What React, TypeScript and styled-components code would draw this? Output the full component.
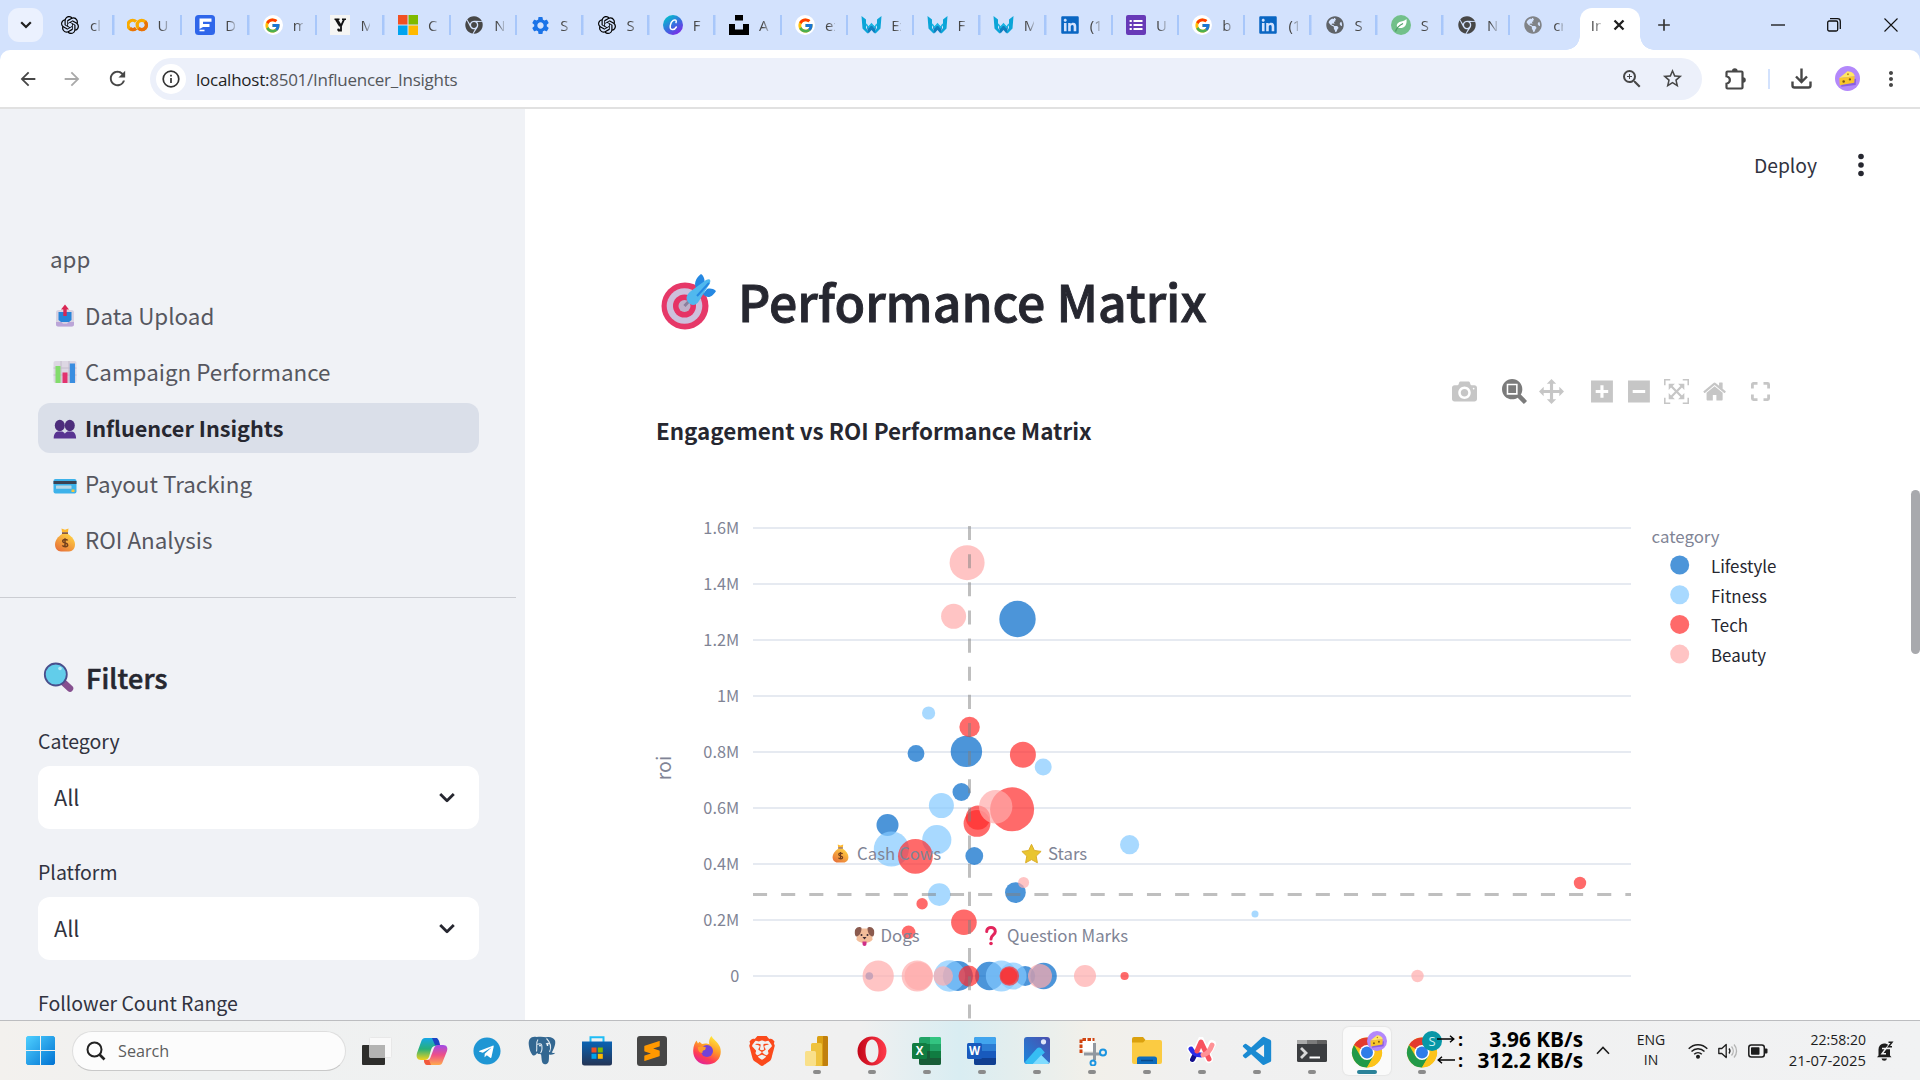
import React from "react";
import styled, { createGlobalStyle, css } from "styled-components";
import { FcGoogle } from "react-icons/fc";
import { SiOpenai, SiBrave, SiSublimetext } from "react-icons/si";
import { FaChrome, FaGlobeAmericas, FaTelegram, FaLinkedin } from "react-icons/fa";
import {
  MdSettings,
  MdArrowBack,
  MdArrowForward,
  MdRefresh,
  MdOutlineZoomIn,
  MdStarOutline,
  MdMoreVert,
  MdAdd,
} from "react-icons/md";
import { BiLogoVisualStudio } from "react-icons/bi";

const SOURCE = `"Noto Sans CJK SC", "Noto Sans", sans-serif`;
const SYSTEM = `"Open Sans", "Noto Sans", sans-serif`;

const GlobalStyle = createGlobalStyle`
  html, body { margin: 0; padding: 0; overflow: hidden; background: #fff; }
  * { box-sizing: border-box; }
  svg { display: block; flex: none; }
`;

const Screen = styled.div`
  width: 1920px;
  height: 1080px;
  display: flex;
  flex-direction: column;
  overflow: hidden;
  font-family: ${SYSTEM};
`;

/* ---------- browser tabs ---------- */

const TabStrip = styled.div`
  height: 50px;
  flex: none;
  display: flex;
  align-items: stretch;
  background: #d3e2fd;
  padding-left: 8px;
`;
const TabSearch = styled.div`
  width: 35px;
  height: 34px;
  margin: 8px 4px 0 0;
  border-radius: 11px;
  background: #ebf1fe;
  display: flex;
  align-items: center;
  justify-content: center;
  color: #1f1f1f;
`;
const Tab = styled.div<{ $w: number; $last?: boolean }>`
  width: ${(p) => p.$w}px;
  flex: none;
  display: flex;
  align-items: center;
  padding-left: 13px;
  gap: 10px;
  background: ${(p) =>
    p.$last ? "none" : "linear-gradient(#a8c7fa, #a8c7fa) right 15px / 2.5px 20px no-repeat"};
`;
const Favicon = styled.span`
  width: 20px;
  height: 20px;
  flex: none;
  display: flex;
  align-items: center;
  justify-content: center;
`;
const FaviconDisc = styled(Favicon)`
  border-radius: 50%;
  background: #fff;
`;
const TabText = styled.span`
  width: 10px;
  overflow: hidden;
  white-space: nowrap;
  font-size: 15px;
  line-height: 22px;
  color: #474747;
  mask-image: linear-gradient(90deg, #000 35%, rgba(0, 0, 0, 0.25));
`;
const ActiveTab = styled.div`
  width: 60px;
  height: 42px;
  margin-top: 8px;
  flex: none;
  position: relative;
  border-radius: 12px 12px 0 0;
  background: #fff;
  display: flex;
  align-items: center;
  padding: 0 0 8px 11px;
  gap: 12px;
  color: #1f1f1f;
  &::before,
  &::after {
    content: "";
    position: absolute;
    bottom: 0;
    width: 14px;
    height: 14px;
  }
  &::before {
    left: -14px;
    background: radial-gradient(circle at 0 0, transparent 13.5px, #fff 14px);
  }
  &::after {
    right: -14px;
    background: radial-gradient(circle at 100% 0, transparent 13.5px, #fff 14px);
  }
`;
const StripButton = styled.div<{ $w: number }>`
  width: ${(p) => p.$w}px;
  display: flex;
  align-items: center;
  justify-content: center;
  color: #333;
`;
const Spacer = styled.div`
  flex: 1;
`;

/* ---------- browser toolbar ---------- */

const ToolbarBack = styled.div`
  flex: none;
  background: #d3e2fd;
`;
const Toolbar = styled.div`
  height: 59px;
  border-bottom: 2px solid #e1e1e1;
  border-radius: 10px 10px 0 0;
  background: #fff;
  display: flex;
  align-items: center;
  padding-left: 5px;
  color: #474747;
`;
const ToolSlot = styled.div<{ $w: number; $dim?: boolean }>`
  width: ${(p) => p.$w}px;
  flex: none;
  display: flex;
  justify-content: center;
  color: ${(p) => (p.$dim ? "#a9a9a9" : "#474747")};
`;
const AddressBar = styled.div`
  width: 1552px;
  height: 42px;
  flex: none;
  margin-left: 9px;
  border-radius: 21px;
  background: #ecf0fa;
  display: flex;
  align-items: center;
  padding: 0 10px 0 6px;
`;
const SiteInfo = styled.div`
  width: 30px;
  height: 30px;
  border-radius: 50%;
  background: #fff;
  display: flex;
  align-items: center;
  justify-content: center;
  margin-right: 10px;
`;
const Url = styled.div`
  font-size: 17px;
  letter-spacing: -0.25px;
  color: #54575c;
  flex: 1;
  padding-top: 1px;
  b {
    font-weight: 400;
    color: #1f1f1f;
  }
`;
const ToolDivider = styled.div`
  width: 2px;
  height: 20px;
  background: #d3e2fd;
`;

/* ---------- page ---------- */

const Page = styled.div`
  height: 911px;
  flex: none;
  display: flex;
  overflow: hidden;
  font-family: ${SOURCE};
`;
const Sidebar = styled.aside`
  width: 525px;
  flex: none;
  background: #f0f2f6;
  padding-top: 126px;
  overflow: hidden;
`;
const Nav = styled.nav`
  display: flex;
  flex-direction: column;
  gap: 6px;
  padding: 0 46px 0 38px;
`;
const NavItem = styled.div<{ $active?: boolean; $plain?: boolean }>`
  height: 50px;
  border-radius: 12px;
  padding: 0 0 ${(p) => (p.$plain ? 4 : 2)}px 12px;
  display: flex;
  align-items: center;
  font-size: 22.4px;
  line-height: 46px;
  white-space: pre;
  color: #56575f;
  ${(p) =>
    p.$active &&
    css`
      background: #dadfe9;
      color: #262730;
      font-weight: 700;
      font-size: 21.65px;
      padding-bottom: 0;
    `}
`;
const NavIcon = styled.span`
  width: 35px;
  padding: 1px 0 0 3px;
  flex: none;
`;
const SideRule = styled.div`
  width: 516px;
  height: 1px;
  margin-top: 32px;
  background: #cbcdd2;
`;
const Filters = styled.section`
  padding: 57px 46px 0 38px;
`;
const FilterTitle = styled.div`
  height: 46px;
  display: flex;
  align-items: center;
  gap: 10px;
  padding-left: 4px;
  font-size: 26.9px;
  font-weight: 500;
  letter-spacing: 0.2px;
  -webkit-text-stroke: 0.6px #262730;
  color: #262730;
  line-height: 46px;
`;
const FieldList = styled.div`
  margin-top: 28px;
`;
const Field = styled.div`
  margin-bottom: 31px;
`;
const FieldLabel = styled.div`
  font-size: 19.5px;
  line-height: 24px;
  margin-bottom: 13px;
  color: #31333f;
`;
const Select = styled.div`
  height: 63px;
  border-radius: 12px;
  background: #fff;
  display: flex;
  align-items: center;
  justify-content: space-between;
  padding: 0 24px 1px 16px;
  font-size: 21.7px;
  line-height: 60px;
  color: #31333f;
`;

const Main = styled.main`
  flex: 1;
  position: relative;
  display: flex;
  flex-direction: column;
  padding-left: 132px;
`;
const AppHeader = styled.header`
  height: 114px;
  flex: none;
  display: flex;
  align-items: center;
  justify-content: flex-end;
  padding: 0 45px 2px 0;
  gap: 30px;
  font-size: 19.3px;
  line-height: 30px;
  color: #31333f;
`;
const Heading = styled.h2`
  margin: 45px 0 0;
  height: 64px;
  flex: none;
  display: flex;
  align-items: center;
  gap: 21px;
  padding-left: 3px;
  font-size: 49.95px;
  font-weight: 500;
  -webkit-text-stroke: 0.9px #262730;
  line-height: 64px;
  color: #262730;
`;
const ModeBar = styled.div`
  margin: 46px 0 0 789px;
  height: 27px;
  flex: none;
  display: flex;
  align-items: center;
  gap: 12px;
`;
const ModeGroup = styled.div`
  display: flex;
  &:last-child {
    margin-left: -3px;
  }
`;
const ModeButton = styled.div<{ $on?: boolean }>`
  width: 37.6px;
  display: flex;
  justify-content: center;
  color: ${(p) => (p.$on ? "#7b7b7b" : "#c6c6c6")};
`;
const ChartTitle = styled.div`
  margin: 10px 0 0 -1px;
  height: 30px;
  flex: none;
  font-size: 22.4px;
  font-weight: 700;
  line-height: 30px;
  color: #262730;
`;
const ChartSvg = styled.svg`
  margin-top: 35px;
  width: 1200px;
  height: 540px;
  overflow: visible;
  font-family: ${SOURCE};
`;
const ScrollThumb = styled.div`
  position: absolute;
  right: 0;
  top: 381px;
  width: 9px;
  height: 164px;
  border-radius: 5px;
  background: #a8a9ad;
`;

/* ---------- taskbar ---------- */

const Taskbar = styled.footer`
  height: 60px;
  flex: none;
  border-top: 1px solid #bcbdc0;
  background: linear-gradient(
    90deg,
    #f3f1ee 0,
    #eff1f1 200px,
    #f0f0f0 860px,
    #d9edf2 960px,
    #e3eeee 1010px,
    #f2f0ea 1090px,
    #f0f0f0 1200px,
    #f1f2f3 1920px
  );
  display: flex;
  align-items: center;
  padding-left: 26px;
`;
const SearchBox = styled.div`
  width: 274px;
  height: 40px;
  margin: 0 3px 0 17px;
  border-radius: 20px;
  background: #fcfcfc;
  border: 1px solid #dedede;
  border-bottom-color: #c9c9c9;
  display: flex;
  align-items: center;
  gap: 12px;
  padding-left: 13px;
  font-size: 16.2px;
  color: #5c5c5c;
`;
const AppSlot = styled.div<{ $state?: "open" | "active" }>`
  width: 55px;
  height: 59px;
  flex: none;
  display: flex;
  align-items: center;
  justify-content: center;
  position: relative;
  &::after {
    content: "";
    position: absolute;
    bottom: 6px;
    left: 50%;
    transform: translateX(-50%);
    height: 4px;
    border-radius: 2px;
    width: ${(p) => (p.$state === "active" ? 20 : p.$state === "open" ? 8 : 0)}px;
    background: ${(p) => (p.$state === "active" ? "#2b8299" : "#8b8b8b")};
  }
`;
const ActivePlate = styled.div<{ $on?: boolean }>`
  width: 48px;
  height: 48px;
  border-radius: 6px;
  background: ${(p) => (p.$on ? "#fafafa" : "none")};
  box-shadow: ${(p) => (p.$on ? "0 0 1px 1px #e6e6e6" : "none")};
  display: flex;
  align-items: center;
  justify-content: center;
`;
const NetMeter = styled.div`
  width: 146px;
  margin-left: -12px;
  padding-bottom: 2px;
  position: relative;
  z-index: 1;
  flex: none;
  color: #000;
  font-weight: 700;
  font-size: 20.8px;
  line-height: 21px;
`;
const NetLine = styled.div`
  display: flex;
  align-items: center;
  justify-content: space-between;
  white-space: nowrap;
`;
const NetArrow = styled.span`
  display: flex;
  align-items: center;
  gap: 3px;
  font-size: 18px;
`;
const Tray = styled.div`
  display: flex;
  align-items: center;
  flex: 1;
  color: #1c1c1c;
`;
const TrayItem = styled.div<{ $w: number }>`
  width: ${(p) => p.$w}px;
  display: flex;
  justify-content: center;
`;
const TrayText = styled.div<{ $w: number; $right?: boolean }>`
  width: ${(p) => p.$w}px;
  padding-bottom: 2px;
  font-size: 14px;
  line-height: 20px;
  text-align: ${(p) => (p.$right ? "right" : "center")};
`;
const DateLine = styled.div`
  font-size: 14.8px;
`;

/* ---------- favicons ---------- */

const Canva = () => (
  <svg width="20" height="20" viewBox="0 0 20 20">
    <defs>
      <linearGradient id="canva" x1="0" y1="0" x2="0.7" y2="1">
        <stop offset="0.1" stopColor="#00c4cc" />
        <stop offset="0.6" stopColor="#3a6be0" />
        <stop offset="1" stopColor="#7d2ae8" />
      </linearGradient>
    </defs>
    <circle cx="10" cy="10" r="10" fill="url(#canva)" />
    <path d="M13 7.6c1-2.2-.8-3.400-2.800-2.200-3 2-4.200 8-1.500 9 1.800.600 3.600-.700 4.600-2.400" stroke="#fff" strokeWidth="1.500" fill="none" strokeLinecap="round" />
  </svg>
);
const Colab = () => (
  <svg width="21" height="14" viewBox="0 0 21 14" fill="none" strokeWidth="3.300">
    <path d="M9 3.600A4.700 4.700 0 1 0 9 10.400" stroke="#f9ab00" />
    <circle cx="14.800" cy="7" r="4.600" stroke="#f9ab00" />
    <path d="M11.500 10.300A4.600 4.600 0 0 0 18 3.700M3 10.300a4.700 4.700 0 0 0 6 .100" stroke="#e8710a" />
  </svg>
);
const FormF = () => (
  <svg width="20" height="20" viewBox="0 0 20 20">
    <rect width="20" height="20" rx="3.500" fill="#2f66ea" />
    <path d="M4.500 3.500h12v3.200H8v2.300h6.500v3H8l-3.500 2z" fill="#fff" />
    <path d="M4.500 15.500h5" stroke="#fff" strokeWidth="1.600" />
  </svg>
);
const YMark = () => (
  <svg width="20" height="20" viewBox="0 0 20 20">
    <rect width="20" height="20" fill="#f5f5f3" />
    <path d="M4.500 4.300h5M12 4.300h4" stroke="#111" strokeWidth="1.400" />
    <path d="m6.500 4.500 4 6.500" stroke="#111" strokeWidth="3" />
    <path d="M14 4.500 11 11v4.500H8" stroke="#111" strokeWidth="1.800" fill="none" />
    <circle cx="8.500" cy="14.800" r="1.300" fill="#111" />
  </svg>
);
const FourSquares = () => (
  <svg width="20" height="20" viewBox="0 0 20 20">
    <path d="M0 0h9.500v9.500H0z" fill="#f25022" />
    <path d="M10.500 0H20v9.500h-9.500z" fill="#7fba00" />
    <path d="M0 10.500h9.500V20H0z" fill="#00a4ef" />
    <path d="M10.500 10.500H20V20h-9.500z" fill="#ffb900" />
  </svg>
);
const Unsplash = () => (
  <svg width="20" height="20" viewBox="0 0 20 20">
    <path d="M6 0h8v5.500H6zM0 9h6v5.500h8V9h6v11H0z" />
  </svg>
);
const Wolf = () => (
  <svg width="21" height="20" viewBox="0 0 21 20">
    <path d="M.500 1 5 4.500V13l3 4-1.500 1.500L1.500 13.500zM20.500 1 16 4.500V13l-3 4 1.500 1.500 5-5z" fill="#0ba5d8" />
    <path d="M6 12.500 10.500 9l4.500 3.500-1.500 6L10.500 15l-3 3.500z" fill="#0f7fc0" />
    <path d="m5 9 2.500 3.500L10.500 9l3 3.500L16 9" stroke="#1ab4e2" fill="none" strokeWidth="1.500" />
  </svg>
);
const Forms = () => (
  <svg width="20" height="20" viewBox="0 0 20 20">
    <rect width="20" height="20" rx="2" fill="#673ab7" />
    <path d="M7.500 6h9M7.500 10h9M7.500 14h9" stroke="#fff" strokeWidth="2.200" />
    <path d="M3.600 6h2.200M3.600 10h2.200M3.600 14h2.200" stroke="#fff" strokeWidth="2.200" />
  </svg>
);
const Leaf = () => (
  <svg width="20" height="20" viewBox="0 0 20 20">
    <circle cx="10" cy="10" r="10" fill="#72c08a" />
    <path d="M15.500 4c.800 6-2 9.500-7.500 9-3-.400-3-4.500.500-6 2.300-1 5-.800 7-3z" fill="#fff" />
    <path d="M4.500 16.500C5.500 13 8 10.500 12 8.500" stroke="#4f9d68" strokeWidth="1.300" fill="none" />
  </svg>
);
const Cheese = ({ size = 26 }: { size?: number }) => (
  <svg width={size} height={size} viewBox="0 0 26 26">
    <circle cx="13" cy="13" r="13" fill="#b388fb" />
    <path d="M5 20.500 20 18.500 20.500 12 5.500 14z" fill="#8a5fe0" transform="translate(1.500 1.200)" />
    <path d="M4.500 12.500 13 5.500c4 .200 7 2 7.500 5.200z" fill="#ffe766" />
    <path d="M4.500 12.500 20.500 10.700 20 17.500 5 20z" fill="#f8c62c" />
    <circle cx="9" cy="16" r="1.300" fill="#7a5416" />
    <circle cx="15.500" cy="14" r="1.200" fill="#7a5416" />
    <circle cx="13.500" cy="8.500" r="1" fill="#b88a1c" />
  </svg>
);

const tabs: { icon: React.ReactNode; text: string; disc?: boolean }[] = [
  { icon: <SiOpenai size={18} />, text: "cl" },
  { icon: <Colab />, text: "U" },
  { icon: <FormF />, text: "D" },
  { icon: <FcGoogle size={17} />, text: "m", disc: true },
  { icon: <YMark />, text: "M" },
  { icon: <FourSquares />, text: "C" },
  { icon: <FaChrome size={18} color="#474747" />, text: "N" },
  { icon: <MdSettings size={21} color="#1a73e8" />, text: "S" },
  { icon: <SiOpenai size={18} />, text: "S" },
  { icon: <Canva />, text: "F" },
  { icon: <Unsplash />, text: "A" },
  { icon: <FcGoogle size={17} />, text: "ex", disc: true },
  { icon: <Wolf />, text: "Ex" },
  { icon: <Wolf />, text: "F" },
  { icon: <Wolf />, text: "M" },
  { icon: <FaLinkedin size={20} color="#0a66c2" />, text: "(1" },
  { icon: <Forms />, text: "U" },
  { icon: <FcGoogle size={17} />, text: "b", disc: true },
  { icon: <FaLinkedin size={20} color="#0a66c2" />, text: "(1" },
  { icon: <FaGlobeAmericas size={18} color="#5f6368" />, text: "S" },
  { icon: <Leaf />, text: "S" },
  { icon: <FaChrome size={18} color="#474747" />, text: "N" },
  { icon: <FaGlobeAmericas size={18} color="#808387" />, text: "cr" },
];

/* ---------- emoji drawings ---------- */

const UploadTray = () => (
  <svg width="24" height="24" viewBox="0 0 24 24">
    <rect x="3" y="6" width="18" height="16.500" rx="2.500" fill="#d8d2e2" />
    <path d="M5.500 8h13v8l-2.500 2h-8l-2.500-2z" fill="#2784d8" />
    <path d="M3 18h5.500l1.500 1.800h4l1.500-1.800H21v2.500a2 2 0 0 1-2 2H5a2 2 0 0 1-2-2z" fill="#bba5d8" />
    <path d="M12 .500 16 5.500h-2.300V12h-3.400V5.500H8z" fill="#d92653" />
  </svg>
);
const BarChart = () => (
  <svg width="24" height="24" viewBox="0 0 24 24">
    <rect x=".500" y="1" width="23" height="22" rx="2" fill="#ddd7e3" />
    <path d="M8 1v22M16 1v22M.500 8h23M.500 15h23" stroke="#c4bccb" />
    <rect x="2.500" y="6" width="5" height="17" fill="#83dc6c" />
    <rect x="9.500" y="12.500" width="5" height="10.500" fill="#e2336f" />
    <rect x="16.800" y="3.500" width="5.200" height="19.500" fill="#3a8ee0" />
  </svg>
);
const People = () => (
  <svg width="24" height="24" viewBox="0 0 24 24" fill="#4d2d7c">
    <ellipse cx="6.800" cy="8.500" rx="5" ry="5.800" />
    <ellipse cx="16.800" cy="8.500" rx="5" ry="5.800" />
    <path d="M.700 21.500c0-5 2.300-6.500 4-7h4.600c1.200.400 2.200 1.300 2.600 2.300.400-1 1.400-1.900 2.600-2.300h4.600c1.700.500 4 2 4 7z" fill="#583491" />
  </svg>
);
const Card = () => (
  <svg width="24" height="24" viewBox="0 0 24 24">
    <rect x=".500" y="7" width="23" height="14.500" rx="2" fill="#3db2ea" />
    <rect x=".500" y="9" width="23" height="3" fill="#3b4252" />
    <rect x="3" y="13.500" width="15.500" height="3.300" rx=".500" fill="#b9d8e6" />
    <rect x="18.500" y="17.500" width="3" height="2.500" fill="#f5c63c" />
  </svg>
);
const BagShape = () => (
  <>
    <path d="M8.500.500 12 1.800 15.500.500 15 4H9z" fill="#ffb92e" />
    <path d="M9 4.200h6v1.800H9z" fill="#8a5a3c" />
    <path d="M9 6h6c4 2.500 7 6.500 7 10.500s-2.500 7-6 7H8c-3.500 0-6-3-6-7S5 8.500 9 6z" fill="url(#bag)" />
    <path d="M14.600 12.500c-.800-1.500-4.900-1.600-4.900.700 0 2.600 5 1.200 5 3.800 0 2.300-4.300 2.200-5.300.400M12 10.200v9.400" stroke="#74401c" strokeWidth="1.500" fill="none" />
  </>
);
const MoneyBag = () => (
  <svg width="24" height="24" viewBox="0 0 24 24">
    <defs>
      <linearGradient id="bag" x1="1" y1="0" x2="0.300" y2="1">
        <stop offset="0.200" stopColor="#fdc842" />
        <stop offset="1" stopColor="#e87539" />
      </linearGradient>
    </defs>
    <BagShape />
  </svg>
);
const Magnifier = () => (
  <svg width="34" height="34" viewBox="0 0 34 34">
    <path d="m21.500 21.500 6.500 6" stroke="#86508f" strokeWidth="6.500" strokeLinecap="round" />
    <circle cx="13.800" cy="13.500" r="11" fill="#62cdea" stroke="#4a4f8c" strokeWidth="1.800" />
    <circle cx="18" cy="7.500" r="1.800" fill="#b4ecfa" />
  </svg>
);
const Target = () => (
  <svg width="57" height="62" viewBox="0 -4 57 62">
    <circle cx="25" cy="33" r="23.500" fill="#e63868" />
    <circle cx="24.500" cy="33" r="17.800" fill="#cdc0dc" />
    <circle cx="24.500" cy="33" r="11.500" fill="#e63365" />
    <circle cx="24.500" cy="33" r="6" fill="#bfb0c8" />
    <path d="M24.500 33 31 26" stroke="#8b7f9d" strokeWidth="3" />
    <path d="M36 15c-3-6 2-12 5-14 3 2 4 6 3.500 10zM43 21c5 6 10 2 13-3-3-2.500-6-3-9-2z" fill="#2588e2" />
    <path d="M28 29c-3-4-1-8 3-11L46 7c4-2 5 0 4 3L39 28c-3 5-8 5-11 1z" fill="#50b8ee" />
    <path d="M37 23 49 10" stroke="#2588e2" strokeWidth="2" />
  </svg>
);
const KebabMenu = () => (
  <svg width="28" height="28" viewBox="0 0 28 28" fill="#262730">
    <circle cx="14" cy="5.500" r="2.800" />
    <circle cx="14" cy="14" r="2.800" />
    <circle cx="14" cy="22.500" r="2.800" />
  </svg>
);
const Chevron = () => (
  <svg width="16" height="11" viewBox="0 0 16 11" fill="none" stroke="#262730" strokeWidth="2.800">
    <path d="m1.200 2 6.800 6.800 6.800-6.800" strokeLinejoin="round" />
  </svg>
);

/* ---------- chart toolbar glyphs (drawn on a flipped 1000-unit em) ---------- */

const Glyph = ({ d, w = 1000 }: { d: string; w?: number }) => (
  <svg width={w / 40} height="25" viewBox={`0 0 ${w} 1000`} fill="currentColor">
    <path d={d} transform="matrix(1 0 0 -1 0 850)" />
  </svg>
);
const glyphs = {
  camera:
    "m500 450c-83 0-150-67-150-150 0-83 67-150 150-150 83 0 150 67 150 150 0 83-67 150-150 150z m400 150h-120c-16 0-34 13-39 29l-31 93c-6 15-23 28-40 28h-340c-16 0-34-13-39-28l-31-94c-6-15-23-28-40-28h-120c-55 0-100-45-100-100v-450c0-55 45-100 100-100h800c55 0 100 45 100 100v450c0 55-45 100-100 100z m-400-550c-138 0-250 112-250 250 0 138 112 250 250 250 138 0 250-112 250-250 0-138-112-250-250-250z m365 380c-19 0-35 16-35 35 0 19 16 35 35 35 19 0 35-16 35-35 0-19-16-35-35-35z",
  zoom: "m1000-25l-250 251c40 63 63 138 63 218 0 224-182 406-407 406-224 0-406-182-406-406s183-406 407-406c80 0 155 22 218 62l250-250 125 125z m-812 250l0 438 437 0 0-438-437 0z m62 375l313 0 0-312-313 0 0 312z",
  pan: "m1000 350l-187 188 0-125-250 0 0 250 125 0-188 187-187-187 125 0 0-250-250 0 0 125-188-188 186-187 0 125 252 0 0-250-125 0 187-188 188 188-125 0 0 250 250 0 0-126 187 188z",
  plus: "m1 787l0-875 875 0 0 875-875 0z m687-500l-187 0 0-187-125 0 0 187-188 0 0 125 188 0 0 187 125 0 0-187 187 0 0-125z",
  minus: "m0 788l0-876 875 0 0 876-875 0z m688-500l-500 0 0 125 500 0 0-125z",
  autoscale:
    "m250 850l-187 0-63 0 0-62 0-188 63 0 0 188 187 0 0 62z m688 0l-188 0 0-62 188 0 0-188 62 0 0 188 0 62-62 0z m-875-938l0 188-63 0 0-188 0-62 63 0 187 0 0 62-187 0z m875 188l0-188-188 0 0-62 188 0 62 0 0 62 0 188-62 0z m-125 188l-1 0-93-94-156 156 156 156 92-93 2 0 0 250-250 0 0-2 93-92-156-156-156 156 94 92 0 2-250 0 0-250 0 0 93 93 157-156-157-156-93 94 0 0 0-250 250 0 0 0-94 93 156 157 156-157-93-93 0 0 250 0 0 250z",
  home: "m786 296v-267q0-15-11-26t-25-10h-214v214h-143v-214h-214q-15 0-25 10t-11 26v267q0 1 0 2t0 2l321 264 321-264q1-1 1-4z m124 39l-34-41q-5-5-12-6h-2q-7 0-12 3l-386 322-386-322q-7-4-13-4-7 2-12 7l-35 41q-4 5-3 13t6 12l401 334q18 15 42 15t43-15l136-114v109q0 8 5 13t13 5h107q8 0 13-5t5-13v-227l122-102q5-5 6-12t-4-13z",
};

/* ---------- chart ---------- */

const palette = { Lifestyle: "#0068c9", Fitness: "#83c9ff", Tech: "#ff2b2b", Beauty: "#ffabab" };
type Category = keyof typeof palette;
const bubbles: Record<Category, [number, number, number][]> = {
  Lifestyle: [
    [1017.5, 619, 18.2], [916, 753.5, 8.4], [966.4, 751.4, 15.7], [961.4, 792, 8.9],
    [887.5, 825, 11], [974.3, 856, 8.9], [1015.4, 892.6, 10.4], [869.3, 976, 3.8],
    [957.9, 976, 15], [989.3, 976, 14.2], [1025.2, 976, 10], [1043.6, 976, 13.2],
  ],
  Fitness: [
    [928.6, 713, 6.6], [1043.2, 767, 8.5], [941.4, 805.6, 12.5], [891.4, 849, 17.6],
    [936.8, 839.7, 14.6], [1129.6, 844.7, 9.6], [939.3, 894.6, 11.3], [949.5, 976, 15.7],
    [1001.3, 976, 15.5], [1013, 976, 13.6], [1255, 914, 3.5],
  ],
  Tech: [
    [969.6, 727, 10.2], [1022.9, 754.8, 13], [977, 823.4, 13.4], [977.9, 817.6, 12.2],
    [1012.1, 809.3, 22], [915.4, 856.3, 17.4], [922.1, 903.7, 5.7], [963.9, 922.3, 12.8],
    [908.6, 932.3, 6.8], [968.9, 976, 10.4], [1009.3, 976, 9.8], [1008.8, 976, 8.4],
    [1124.6, 976, 4.1], [1580, 883, 6.2],
  ],
  Beauty: [
    [967.1, 562.7, 17.5], [953.6, 616.3, 12.5], [995.7, 806.7, 16.7], [1023.6, 882.5, 5.5],
    [878.2, 976, 15.6], [917.3, 976, 15.6], [918.6, 976, 14], [943.2, 976, 9.8],
    [1040, 976, 12], [1085, 976, 11], [1417.5, 976, 6.2],
  ],
};
const ticks = ["1.6M", "1.4M", "1.2M", "1M", "0.8M", "0.6M", "0.4M", "0.2M", "0"];
const quadrants: [number, number, string][] = [
  [857, 860, "Cash Cows"],
  [1048, 860, "Stars"],
  [880.5, 942, "Dogs"],
  [1007, 942, "Question Marks"],
];

const Chart = () => (
  <ChartSvg viewBox="657 480 1200 540">
    {ticks.map((t, i) => (
      <g key={t}>
        <path d={`M753 ${528 + i * 56}H1631`} stroke="#e6eaf1" strokeWidth="2" />
        <text x="739.200" y={534 + i * 56} textAnchor="end" fontSize="16.300" fill="#808495">
          {t}
        </text>
      </g>
    ))}
    <text transform="translate(671 768) rotate(-90)" textAnchor="middle" fontSize="19.500" fill="#808495">
      roi
    </text>
    {(Object.keys(palette) as Category[]).map((c) => (
      <g key={c} fill={palette[c]}>
        {bubbles[c].map(([x, y, r], i) => (
          <circle key={i} cx={x} cy={y} r={r} opacity="0.700" />
        ))}
      </g>
    ))}
    <g stroke="#808080" strokeOpacity="0.500" strokeWidth="3" strokeDasharray="14.070">
      <path d="M969.500 526V1020" />
      <path d="M753 894.500H1631" />
    </g>
    <svg x="831" y="844" width="19" height="19" viewBox="0 0 24 24">
      <BagShape />
    </svg>
    <path
      transform="translate(1031.500 854)"
      d="M0-9.700 2.900-3.500 9.600-2.600 4.700 2.100 5.900 8.800 0 5.600-5.900 8.800-4.700 2.100-9.600-2.600-2.900-3.500z"
      fill="#e9c52f"
      stroke="#dcae2a"
      strokeLinejoin="round"
    />
    <g transform="translate(864.500 936)">
      <path d="M-7-7.500h14l1 11c-2 4.500-14 4.500-16 0z" fill="#f3bd9a" />
      <path d="M-9.500-6C-7-10-4-9-3-8c0 4-1.500 8-5.500 8.500C-10-1-9.800-4-9.500-6zM9.500-6C7-10 4-9 3-8c0 4 1.500 8 5.500 8.500C10-1 9.800-4 9.500-6z" fill="#8a5a4e" />
      <circle cx="-3" cy="-1" r="1" fill="#3c2a33" />
      <circle cx="3" cy="-1" r="1" fill="#3c2a33" />
      <path d="M-2 1h4L0 3.500z" fill="#3c2a33" />
      <path d="M-2 5.500h4v2.500a2 2 0 0 1-4 0z" fill="#cf2f86" />
    </g>
    <g transform="translate(991 936)">
      <path d="M-4.300-4.500c0-5.500 8.600-5.500 8.600 0C4.300-1 0-1 0 3" stroke="#e3255c" strokeWidth="3" fill="none" strokeLinecap="round" />
      <circle cx="0" cy="7.500" r="1.800" fill="#e3255c" />
    </g>
    {quadrants.map(([x, y, label]) => (
      <text key={label} x={x} y={y} fontSize="16.800" fill="#808495">
        {label}
      </text>
    ))}
    <text x="1651.500" y="543" fontSize="16.850" fill="#808495">
      category
    </text>
    {(Object.keys(palette) as Category[]).map((c, i) => (
      <g key={c}>
        <circle cx="1679.700" cy={565 + i * 29.7} r="9.500" fill={palette[c]} opacity="0.700" />
        <text x="1711" y={572.8 + i * 29.7} fontSize="16.900" fill="#262730">
          {c}
        </text>
      </g>
    ))}
  </ChartSvg>
);

/* ---------- taskbar icons ---------- */

const WindowsLogo = () => (
  <svg width="29" height="29" viewBox="0 0 29 29">
    <defs>
      <linearGradient id="win" x1="0" y1="0" x2="1" y2="1">
        <stop offset="0" stopColor="#4fd0ff" />
        <stop offset="1" stopColor="#0072d2" />
      </linearGradient>
    </defs>
    <path d="M1.500 0H14v14H0V1.500zM15 0h12.500L29 1.500V14H15zM0 15h14v14H1.500L0 27.500zM15 15h14v12.500L27.500 29H15z" fill="url(#win)" />
  </svg>
);
const SearchGlass = () => (
  <svg width="20" height="20" viewBox="0 0 20 20" fill="none" stroke="#222" strokeWidth="2">
    <circle cx="8.500" cy="8.500" r="7" />
    <path d="m13.500 13.500 5 5" strokeWidth="2.600" />
  </svg>
);
const TaskView = () => (
  <svg width="30" height="30" viewBox="0 0 30 30">
    <rect x="0" y="9" width="23" height="20" rx="1" fill="#2d2d2b" />
    <rect x="7.500" y="1.500" width="22" height="20" rx="1" fill="#fafafa" opacity=".95" stroke="#ddd" strokeWidth=".500" />
    <rect x="7.500" y="9" width="15.500" height="12.500" fill="#b4b4b3" />
  </svg>
);
const Copilot = () => (
  <svg width="32" height="30" viewBox="0 0 32 30">
    <defs>
      <linearGradient id="cpA" x1="0" y1="0" x2="0" y2="1">
        <stop offset="0" stopColor="#16a6e8" />
        <stop offset="0.500" stopColor="#27b07a" />
        <stop offset="1" stopColor="#f4d21c" />
      </linearGradient>
      <linearGradient id="cpB" x1="0" y1="0" x2="0" y2="1">
        <stop offset="0" stopColor="#a04be8" />
        <stop offset="0.500" stopColor="#ee5088" />
        <stop offset="1" stopColor="#ffab4c" />
      </linearGradient>
    </defs>
    <path d="M9 2h12l3 8h-5c-2 0-3 1-4 4l-2 7c-1 2-2 3-4 3H5c-4 0-5-3-4-7L5 6c1-3 2-4 4-4z" fill="url(#cpA)" />
    <path d="M16 2h4c2 0 3 2 4 7h-5z" fill="#1c43c4" />
    <path d="M23 29H11c-2 0-3-3-3-5h3c2 0 3-1 4-4l3-8c1-2 2-3 4-3h5c4 0 5 3 4 6l-4 10c-1 3-2 4-4 4z" fill="url(#cpB)" />
    <path d="M15 29h-4c-2 0-3-3-3-5h5z" fill="#f2593c" />
  </svg>
);
const Disc = styled.span<{ $size: number }>`
  display: flex;
  width: ${(p) => p.$size}px;
  height: ${(p) => p.$size}px;
  border-radius: 50%;
  background: radial-gradient(#fff 60%, transparent 61%);
`;
const Elephant = () => (
  <svg width="28" height="29" viewBox="0 0 28 29">
    <path
      d="M8.500 1C3 0 .500 3 .700 8c.200 4 2.300 10.500 4.600 11.500 1.700.500 2.700-1 3.700-2.500 1 .800 2.500 1.300 4 1.200.600 2.300.400 5 1 7.300.600 2.600 2.500 3.200 4.600 2.400 2.200-.800 2.400-2.700 2.400-9.400 2.300.500 4.800.200 6.200-1.700-1.200.200-2.800.400-3.500-.200C26 13 28 7.500 27 4.500 25.500 1.300 21.500.200 18 1.300c-2.500-.700-6-.800-9.500-.300z"
      fill="#336791"
    />
    <path
      d="M10 3.500C7.500 6.500 9.500 10 8.500 15.500M18.500 2.500c3.500 3.500 5.500 8 3 13.500M9.500 8.500c1.500-1.200 4-1 4.200.500.400 3 1 5.500-1.200 8M18 8c1.200-1 3-.800 3.800.200"
      stroke="#dfe8ef"
      strokeWidth="1.100"
      fill="none"
    />
    <circle cx="12" cy="9.500" r=".900" fill="#fff" />
    <circle cx="19.500" cy="9" r=".900" fill="#fff" />
  </svg>
);
const Store = () => (
  <svg width="30" height="30" viewBox="0 0 30 30">
    <defs>
      <linearGradient id="store" x1="0" y1="0" x2="0" y2="1">
        <stop offset="0" stopColor="#0a63b4" />
        <stop offset="1" stopColor="#243455" />
      </linearGradient>
    </defs>
    <path d="M8.500 6V1.200h13V6" stroke="#20bdf5" strokeWidth="2" fill="none" />
    <path d="M0 5.500h30V27a2.500 2.500 0 0 1-2.500 2.500h-25A2.500 2.500 0 0 1 0 27z" fill="url(#store)" />
    <path d="M9.500 11.500h5v5h-5z" fill="#f25022" />
    <path d="M15.800 11.500h5v5h-5z" fill="#7fba00" />
    <path d="M9.500 17.800h5v5h-5z" fill="#00a4ef" />
    <path d="M15.800 17.800h5v5h-5z" fill="#ffb900" />
  </svg>
);
const SublimeTile = styled.span`
  width: 30px;
  height: 30px;
  border-radius: 3px;
  background: #464646;
  display: flex;
  align-items: center;
  justify-content: center;
  color: #ff9800;
`;
const Firefox = () => (
  <svg width="28" height="29" viewBox="0 0 28 29">
    <defs>
      <linearGradient id="fox" x1="0.800" y1="0" x2="0.300" y2="1">
        <stop offset="0.050" stopColor="#ffe93a" />
        <stop offset="0.450" stopColor="#ff9528" />
        <stop offset="0.750" stopColor="#ff3b55" />
        <stop offset="1" stopColor="#e0249a" />
      </linearGradient>
    </defs>
    <path d="M18.500 0c1 3 6 5 8.500 11 3 9-3 17.500-13 17.500C5 28.500 0 22 .200 14.500.300 10 2 6.500 3.500 4.500L5 7.500l1.500-1.800L9 8c3-1 6-.500 7.500.500-1-3 0-6.500 2-8.500z" fill="url(#fox)" />
    <circle cx="14" cy="15" r="6" fill="#7442d8" />
    <path d="M5 11c3-1 6-.500 8 .500l-1 2.500c-2 0-3 1.500-2.500 3-3 0-5-3-4.500-6z" fill="#ff9a2c" />
  </svg>
);
const PowerBi = () => (
  <svg width="24" height="30" viewBox="0 0 24 30">
    <rect x="12" width="11" height="30" rx="1.500" fill="#dba014" />
    <path d="M18 0h3.500A1.500 1.500 0 0 1 23 1.500v27a1.500 1.500 0 0 1-1.500 1.500H18z" fill="#c1800d" />
    <rect x="6" y="7" width="11" height="23" rx="1.500" fill="#efc33e" />
    <rect x="0" y="15" width="11" height="15" rx="1.500" fill="#f9e08a" />
  </svg>
);
const Opera = () => (
  <svg width="30" height="30" viewBox="0 0 30 30">
    <defs>
      <linearGradient id="opera" x1="0" y1="0" x2="1" y2="0">
        <stop offset="0" stopColor="#c30618" />
        <stop offset="1" stopColor="#ff3a4a" />
      </linearGradient>
    </defs>
    <path fillRule="evenodd" d="M15 .500a14.500 14.500 0 1 1 0 29 14.500 14.500 0 0 1 0-29zM15 3.500c-4 0-6.500 5-6.500 11.500S11 26.500 15 26.500 21.500 21.500 21.500 15 19 3.500 15 3.500z" fill="url(#opera)" />
  </svg>
);
const OfficeLetter = styled.text`
  font: 700 11.5px "Open Sans", sans-serif;
  fill: #fff;
`;
const Office = ({ letter, colors }: { letter: string; colors: string[] }) => (
  <svg width="30" height="30" viewBox="0 0 30 30">
    <rect x="7" y="1" width="22" height="28" rx="2" fill={colors[1]} />
    {letter === "W" ? (
      <>
        <path d="M7 3a2 2 0 0 1 2-2h18a2 2 0 0 1 2 2v5H7z" fill={colors[0]} />
        <path d="M7 15h22v7H7z" fill={colors[2]} />
        <path d="M7 22h22v5a2 2 0 0 1-2 2H9a2 2 0 0 1-2-2z" fill={colors[3]} />
      </>
    ) : (
      <>
        <path d="M18 1h9a2 2 0 0 1 2 2v5H18z" fill={colors[0]} />
        <path d="M7 8h11v7H7zM18 15h11v7H18z" fill={colors[2]} />
        <path d="M7 15h11v7h11v5a2 2 0 0 1-2 2H9a2 2 0 0 1-2-2z" fill={colors[3]} />
      </>
    )}
    <rect x="0" y="7" width="15" height="16" rx="1.500" fill={colors[4]} />
    <OfficeLetter x="7.500" y="19" textAnchor="middle">
      {letter}
    </OfficeLetter>
  </svg>
);
const Photos = () => (
  <svg width="26" height="27" viewBox="0 0 26 27">
    <defs>
      <linearGradient id="photo" x1="0" y1="1" x2="1" y2="0">
        <stop offset="0" stopColor="#1a86dc" />
        <stop offset="1" stopColor="#4b4fae" />
      </linearGradient>
    </defs>
    <rect width="26" height="27" rx="3" fill="url(#photo)" />
    <path d="M1 25 12.800 11.500a3 3 0 0 1 4.600 0l3.400 3.900L8.500 27H3a3 3 0 0 1-2-2z" fill="#36bdf3" />
    <path d="m8.500 27 8.800-9 8 8a3 3 0 0 1-2.300 1z" fill="#7fdcff" />
    <circle cx="19.500" cy="4.800" r="2.600" fill="#dfe6f8" />
  </svg>
);
const Snip = () => (
  <svg width="30" height="30" viewBox="0 0 30 30" fill="none">
    <path d="M5 3h12v12H5z" fill="#fff" />
    <path d="M4 17V3.500h13.500" stroke="#d0430f" strokeWidth="3" strokeDasharray="3.500 1.500" />
    <path d="M17.500 7v17M7 18h17" stroke="#9198a0" strokeWidth="3" />
    <circle cx="26" cy="16.500" r="3" stroke="#1c94e0" strokeWidth="2" />
    <circle cx="16" cy="27" r="2.500" stroke="#1c94e0" strokeWidth="2" />
  </svg>
);
const Folder = () => (
  <svg width="30" height="27" viewBox="0 0 30 27">
    <path d="M0 2a2 2 0 0 1 2-2h9l2.500 3v5H0z" fill="#dba10e" />
    <path d="M0 5.500h11L13.500 3H28a2 2 0 0 1 2 2v20a2 2 0 0 1-2 2H2a2 2 0 0 1-2-2z" fill="#fbcb42" />
    <path d="M5 27v-5a2.500 2.500 0 0 1 2.500-2.500h15A2.500 2.500 0 0 1 25 22v5z" fill="#0f6cbd" />
    <path d="M9 23.500h12" stroke="#0a4a8a" strokeWidth="1.500" />
  </svg>
);
const Arc = () => (
  <svg width="30" height="28" viewBox="0 0 30 28" fill="none" strokeLinecap="round">
    <g stroke="#fff" strokeWidth="8">
      <path d="m6 22 8-17 8 17M4 12c5 8 16 8 21-5" />
    </g>
    <path d="m5.500 22.500 3-6" stroke="#130f8c" strokeWidth="5" />
    <path d="M4 12c2 4 5 6 10 6" stroke="#2a2be8" strokeWidth="5" />
    <path d="m10 14 4-9 8 17" stroke="#f8525f" strokeWidth="5" strokeLinejoin="round" />
    <path d="M16 18c4-1 7-4 9-10" stroke="#ff9296" strokeWidth="5" />
  </svg>
);
const Terminal = () => (
  <svg width="30" height="22" viewBox="0 0 30 22">
    <rect width="30" height="22" rx="1.500" fill="#3b3d40" />
    <path d="M0 1.500A1.500 1.500 0 0 1 1.500 0H10v4H0z" fill="#a9a9a9" />
    <path d="M10 0h10v4H10z" fill="#7b7b7b" />
    <path d="M20 0h8.500A1.500 1.500 0 0 1 30 1.500V4H20z" fill="#606060" />
    <path d="m4 8 5 5-5 5" stroke="#d8d8d8" strokeWidth="2.800" fill="none" />
    <path d="M12.500 17.500H23" stroke="#fff" strokeWidth="2" />
  </svg>
);
const ChromeBadged = ({ badge }: { badge: "cheese" | "s" }) => (
  <svg width="40" height="40" viewBox="0 0 40 40">
    <circle cx="20" cy="21.500" r="15" fill="#fbc116" />
    <path d="M20 21.500 7 14A15 15 0 0 1 33 14H20z" fill="#e33b2e" />
    <path d="M7 14A15 15 0 0 0 20 36.500l6.500-11.200L13.500 25.200z" fill="#229a49" />
    <path d="M33 14H20V21.500l6.500 3.800L20 36.500A15 15 0 0 0 33 14z" fill="#fcc31a" />
    <circle cx="20" cy="21.500" r="7.500" fill="#fff" />
    <circle cx="20" cy="21.500" r="6" fill="#2f7de9" />
    {badge === "cheese" ? (
      <svg x="20" y="0" width="20" height="20">
        <Cheese size={20} />
      </svg>
    ) : (
      <>
        <circle cx="30" cy="10" r="10" fill="#0797a7" />
        <text x="30" y="14.500" textAnchor="middle" fontSize="13" fill="#cdeff2">
          S
        </text>
      </>
    )}
  </svg>
);
const NetArrowGlyph = ({ left }: { left?: boolean }) => (
  <svg width="18" height="8" viewBox="0 0 18 8" fill="none" stroke="#000" strokeWidth="1.400">
    {left ? <path d="M18 4H1.500M5 .800 1.200 4 5 7.200" /> : <path d="M0 4h16.500M13 .800 16.800 4 13 7.200" />}
  </svg>
);
const Wifi = () => (
  <svg width="20" height="16" viewBox="0 0 20 16" fill="none" stroke="#1c1c1c" strokeWidth="1.400">
    <path d="M.700 5.800C5.800.300 14.200.300 19.300 5.800M3.500 8.600c3.600-3.800 9.400-3.800 13 0M6.200 11.300c2.200-2.300 5.400-2.300 7.600 0" />
    <circle cx="10" cy="13.800" r="1.300" fill="#1c1c1c" />
  </svg>
);
const Speaker = () => (
  <svg width="20" height="16" viewBox="0 0 20 16" fill="none" stroke="#1c1c1c" strokeWidth="1.300">
    <path d="M.800 5.500v5h3l4.400 4V1.500l-4.400 4z" strokeLinejoin="round" />
    <path d="M11 5.500c1.200 1.500 1.200 3.500 0 5" />
    <path d="M13.500 3.500c2.300 2.600 2.300 6.400 0 9M16 1.500c3.400 3.800 3.400 9.200 0 13" stroke="#b3b3b3" />
  </svg>
);
const Battery = () => (
  <svg width="20" height="14" viewBox="0 0 20 14">
    <rect x=".800" y="1" width="15.500" height="12" rx="2.500" fill="none" stroke="#1c1c1c" strokeWidth="1.500" />
    <rect x="3" y="3.200" width="8.500" height="7.600" rx=".800" fill="#1c1c1c" />
    <path d="M17 4.500h1.500a1 1 0 0 1 1 1v3a1 1 0 0 1-1 1H17z" fill="#1c1c1c" />
  </svg>
);
const Bell = () => (
  <svg width="18" height="20" viewBox="0 0 18 20">
    <path d="M2.500 14.500V8.500A5.800 5.800 0 0 1 8 2.500c4 0 6 2.500 6 6v6l1.500 1.700H1zM5.500 17.500h5.500a2.800 2.800 0 0 1-5.500 0z" fill="#1c1c1c" />
    <path d="M12 1h4.500L12.300 6.500H17" stroke="#f1f2f3" strokeWidth="3.600" fill="none" />
    <path d="M6 7.500h4l-4 5.300h4" stroke="#f1f2f3" strokeWidth="1.500" fill="none" />
    <path d="M12.500 1.200H16l-3.500 4.600H16" stroke="#1c1c1c" strokeWidth="1.500" fill="none" />
  </svg>
);
const UpCaret = () => (
  <svg width="14" height="9" viewBox="0 0 14 9" fill="none" stroke="#1c1c1c" strokeWidth="1.600">
    <path d="m1 7.800 6-6.300 6 6.300" />
  </svg>
);
const PuzzlePiece = () => (
  <svg width="23" height="24" viewBox="0 0 23 24">
    <path
      d="M3.500 4.500h14a1 1 0 0 1 1 1v15a1 1 0 0 1-1 1h-14a1 1 0 0 1-1-1v-3.800c4.500-1 4.500-6.400 0-7.400V5.500a1 1 0 0 1 1-1z"
      fill="none"
      stroke="#474747"
      strokeWidth="2.200"
    />
    <path d="M8 4a2.800 2.800 0 0 1 5.600 0zM19 10.200a2.800 2.800 0 0 1 0 5.600z" fill="#474747" />
  </svg>
);

type SlotState = "open" | "active" | undefined;
const apps: [React.ReactNode, SlotState][] = [
  [<TaskView />, undefined],
  [<Copilot />, undefined],
  [<Disc $size={28}><FaTelegram size={28} color="#1f96d4" /></Disc>, undefined],
  [<Elephant />, undefined],
  [<Store />, undefined],
  [<SublimeTile><SiSublimetext size={20} /></SublimeTile>, undefined],
  [<Firefox />, undefined],
  [<SiBrave size={30} color="#fb4a1c" />, undefined],
  [<PowerBi />, "open"],
  [<Opera />, "open"],
  [<Office letter="X" colors={["#33c481", "#21a366", "#107c41", "#185c37", "#107c41"]} />, "open"],
  [<Office letter="W" colors={["#41a5ee", "#2b7cd3", "#185abd", "#103f91", "#185abd"]} />, "open"],
  [<Photos />, "open"],
  [<Snip />, "open"],
  [<Folder />, "open"],
  [<Arc />, "open"],
  [<BiLogoVisualStudio size={34} color="#1a8ad2" />, "open"],
  [<Terminal />, "open"],
  [<ChromeBadged badge="cheese" />, "active"],
  [<ChromeBadged badge="s" />, "open"],
];

const navItems: [React.ReactNode, string][] = [
  [null, "app"],
  [<UploadTray />, "Data Upload"],
  [<BarChart />, "Campaign Performance"],
  [<People />, "Influencer Insights"],
  [<Card />, "Payout Tracking"],
  [<MoneyBag />, "ROI Analysis"],
];

export default function App() {
  return (
    <Screen>
      <GlobalStyle />
      <TabStrip>
        <TabSearch>
          <svg width="12" height="8" viewBox="0 0 12 8" fill="none" stroke="currentColor" strokeWidth="2.200">
            <path d="m1.200 1.200 4.800 4.800 4.800-4.800" />
          </svg>
        </TabSearch>
        {tabs.map((t, i) => {
          const Holder = t.disc ? FaviconDisc : Favicon;
          return (
            <Tab key={i} $w={i < 5 ? 67.6 : i === 22 ? 69.6 : 66.2} $last={i === 22}>
              <Holder>{t.icon}</Holder>
              <TabText>{t.text}</TabText>
            </Tab>
          );
        })}
        <ActiveTab>
          <TabText>In</TabText>
          <svg width="12" height="12" viewBox="0 0 12 12">
            <path d="m1.500 1.500 9 9M10.500 1.500l-9 9" stroke="currentColor" strokeWidth="2.300" />
          </svg>
        </ActiveTab>
        <StripButton $w={49}>
          <MdAdd size={20} />
        </StripButton>
        <Spacer />
        <StripButton $w={57}>
          <svg width="14" height="2" viewBox="0 0 14 2"><path d="M0 1h14" stroke="#111" strokeWidth="1.300" /></svg>
        </StripButton>
        <StripButton $w={56}>
          <svg width="14" height="14" viewBox="0 0 14 14" fill="none" stroke="#111" strokeWidth="1.300">
            <rect x=".700" y="3" width="10" height="10" rx="1.500" />
            <path d="M3 .700h7.500a2.800 2.800 0 0 1 2.800 2.800V11" />
          </svg>
        </StripButton>
        <StripButton $w={58}>
          <svg width="14" height="14" viewBox="0 0 14 14"><path d="m.500.500 13 13M13.500.500l-13 13" stroke="#111" strokeWidth="1.100" /></svg>
        </StripButton>
      </TabStrip>

      <ToolbarBack>
        <Toolbar>
          <ToolSlot $w={45}><MdArrowBack size={22} /></ToolSlot>
          <ToolSlot $w={44} $dim><MdArrowForward size={22} /></ToolSlot>
          <ToolSlot $w={47}><MdRefresh size={23} /></ToolSlot>
          <AddressBar>
            <SiteInfo>
              <svg width="18" height="18" viewBox="0 0 18 18" fill="none" stroke="#333" strokeWidth="1.700">
                <circle cx="9" cy="9" r="7.800" />
                <path d="M9 8v5M9 4.800v1.800" />
              </svg>
            </SiteInfo>
            <Url><b>localhost:</b>8501/Influencer_Insights</Url>
            <ToolSlot $w={40}><MdOutlineZoomIn size={24} /></ToolSlot>
            <ToolSlot $w={40}><MdStarOutline size={23} /></ToolSlot>
          </AddressBar>
          <ToolSlot $w={66}><PuzzlePiece /></ToolSlot>
          <ToolDivider />
          <ToolSlot $w={63}>
            <svg width="21" height="21" viewBox="0 0 21 21" fill="none" stroke="#474747" strokeWidth="2.400">
              <path d="M10.500.500v13M5 8.500l5.500 5.500L16 8.500M1.500 13.500v4a2 2 0 0 0 2 2h14a2 2 0 0 0 2-2v-4" />
            </svg>
          </ToolSlot>
          <ToolSlot $w={29}><Cheese size={25} /></ToolSlot>
          <ToolSlot $w={58}><MdMoreVert size={24} /></ToolSlot>
        </Toolbar>
      </ToolbarBack>

      <Page>
        <Sidebar>
          <Nav>
            {navItems.map(([icon, label]) => (
              <NavItem key={label} $active={label === "Influencer Insights"} $plain={!icon}>
                {icon && <NavIcon>{icon}</NavIcon>}
                {label}
              </NavItem>
            ))}
          </Nav>
          <SideRule />
          <Filters>
            <FilterTitle>
              <Magnifier />
              Filters
            </FilterTitle>
            <FieldList>
              {["Category", "Platform"].map((f) => (
                <Field key={f}>
                  <FieldLabel>{f}</FieldLabel>
                  <Select>
                    All
                    <Chevron />
                  </Select>
                </Field>
              ))}
              <FieldLabel>Follower Count Range</FieldLabel>
            </FieldList>
          </Filters>
        </Sidebar>
        <Main>
          <AppHeader>
            Deploy
            <KebabMenu />
          </AppHeader>
          <Heading>
            <Target />
            Performance Matrix
          </Heading>
          <ModeBar>
            <ModeGroup>
              <ModeButton><Glyph d={glyphs.camera} /></ModeButton>
            </ModeGroup>
            <ModeGroup>
              <ModeButton $on><Glyph d={glyphs.zoom} /></ModeButton>
              <ModeButton><Glyph d={glyphs.pan} /></ModeButton>
            </ModeGroup>
            <ModeGroup>
              <ModeButton><Glyph d={glyphs.plus} w={875} /></ModeButton>
              <ModeButton><Glyph d={glyphs.minus} w={875} /></ModeButton>
              <ModeButton><Glyph d={glyphs.autoscale} /></ModeButton>
              <ModeButton><Glyph d={glyphs.home} w={928} /></ModeButton>
            </ModeGroup>
            <ModeGroup>
              <ModeButton>
                <svg width="19" height="19" viewBox="0 0 19 19" fill="none" stroke="currentColor" strokeWidth="2.800">
                  <path d="M1.400 6.500V2.400a1 1 0 0 1 1-1h4.100M12.500 1.400h4.100a1 1 0 0 1 1 1v4.100M17.600 12.500v4.100a1 1 0 0 1-1 1h-4.100M6.500 17.600H2.400a1 1 0 0 1-1-1v-4.100" />
                </svg>
              </ModeButton>
            </ModeGroup>
          </ModeBar>
          <ChartTitle>Engagement vs ROI Performance Matrix</ChartTitle>
          <Chart />
          <ScrollThumb />
        </Main>
      </Page>

      <Taskbar>
        <WindowsLogo />
        <SearchBox>
          <SearchGlass />
          Search
        </SearchBox>
        {apps.map(([icon, state], i) => (
          <AppSlot key={i} $state={state}>
            <ActivePlate $on={state === "active"}>{icon}</ActivePlate>
          </AppSlot>
        ))}
        <NetMeter>
          <NetLine>
            <NetArrow><NetArrowGlyph />:</NetArrow>
            3.96 KB/s
          </NetLine>
          <NetLine>
            <NetArrow><NetArrowGlyph left />:</NetArrow>
            312.2 KB/s
          </NetLine>
        </NetMeter>
        <Tray>
          <TrayItem $w={40}><UpCaret /></TrayItem>
          <TrayText $w={56}>ENG<br />IN</TrayText>
          <TrayItem $w={38}><Wifi /></TrayItem>
          <TrayItem $w={22}><Speaker /></TrayItem>
          <TrayItem $w={38}><Battery /></TrayItem>
          <TrayText $w={89} $right>
            22:58:20
            <DateLine>21-07-2025</DateLine>
          </TrayText>
          <TrayItem $w={38}><Bell /></TrayItem>
        </Tray>
      </Taskbar>
    </Screen>
  );
}
